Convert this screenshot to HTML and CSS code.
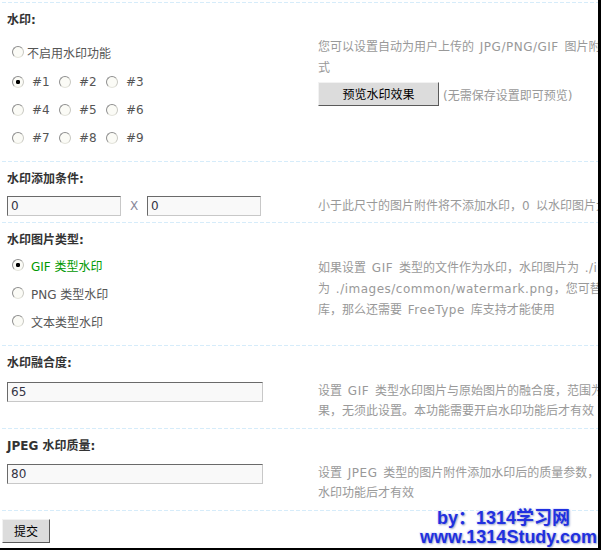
FILE: index.html
```html
<!DOCTYPE html>
<html>
<head>
<meta charset="utf-8">
<link rel="stylesheet" href="styles.css">
</head>
<body>
<div class="page">
  <div class="sec">
    <div class="head">水印:</div>
    <div class="body b1">
      <div class="left">
        <div class="opts first">
          <label class="opt"><input type="radio" class="rd" name="pos"><span>不启用水印功能</span></label>
        </div>
        <div class="opts">
          <label class="opt num"><input type="radio" class="rd" name="pos" checked><span>#1</span></label>
          <label class="opt num"><input type="radio" class="rd" name="pos"><span>#2</span></label>
          <label class="opt num"><input type="radio" class="rd" name="pos"><span>#3</span></label>
        </div>
        <div class="opts">
          <label class="opt num"><input type="radio" class="rd" name="pos"><span>#4</span></label>
          <label class="opt num"><input type="radio" class="rd" name="pos"><span>#5</span></label>
          <label class="opt num"><input type="radio" class="rd" name="pos"><span>#6</span></label>
        </div>
        <div class="opts">
          <label class="opt num"><input type="radio" class="rd" name="pos"><span>#7</span></label>
          <label class="opt num"><input type="radio" class="rd" name="pos"><span>#8</span></label>
          <label class="opt num"><input type="radio" class="rd" name="pos"><span>#9</span></label>
        </div>
      </div>
      <div class="right r1">
        <p class="desc l21">您可以设置自动为用户上传的 <span class="en">JPG/PNG/GIF</span> 图片附件添加水印，请在此选择水印添加的位置(3x3 共 9 个位置可选)。不支持动画 GIF 格<br>式</p>
        <div class="btnrow">
          <button class="btn preview" type="button">预览水印效果</button>
          <span class="note">(无需保存设置即可预览)</span>
        </div>
      </div>
    </div>
  </div>

  <div class="sec">
    <div class="head">水印添加条件:</div>
    <div class="body b2">
      <div class="left sizes">
        <input class="txt short" type="text" value="0">
        <span class="times">X</span>
        <input class="txt short" type="text" value="0">
      </div>
      <div class="right">
        <p class="desc">小于此尺寸的图片附件将不添加水印，<span class="en">0</span> 以水印图片大小为准，0 为不限制</p>
      </div>
    </div>
  </div>

  <div class="sec">
    <div class="head">水印图片类型:</div>
    <div class="body b3">
      <div class="left">
        <div class="opts">
          <label class="opt typ on"><input type="radio" class="rd" name="typ" checked><span>GIF 类型水印</span></label>
        </div>
        <div class="opts">
          <label class="opt typ"><input type="radio" class="rd" name="typ"><span>PNG 类型水印</span></label>
        </div>
        <div class="opts">
          <label class="opt typ"><input type="radio" class="rd" name="typ"><span>文本类型水印</span></label>
        </div>
      </div>
      <div class="right r3">
        <p class="desc l21">如果设置 <span class="en">GIF</span> 类型的文件作为水印，水印图片为 <span class="en">./images/common/watermark.gif</span>，如果设置 PNG 类型的文件作为水印，水印图片<br>为 <span class="en">./images/common/watermark.png</span>，您可替换水印文件以实现不同的水印效果。如果设置文本类型的水印并且使用 TrueType 字体<br>库，那么还需要 <span class="en">FreeType</span> 库支持才能使用</p>
      </div>
    </div>
  </div>

  <div class="sec">
    <div class="head">水印融合度:</div>
    <div class="body b4">
      <div class="left inp">
        <input class="txt long" type="text" value="65">
      </div>
      <div class="right rin">
        <p class="desc l20">设置 <span class="en">GIF</span> 类型水印图片与原始图片的融合度，范围为 1～100 的整数，数值越大水印图片透明度越低。PNG 类型水印本身即可实现融合效<br>果，无须此设置。本功能需要开启水印功能后才有效</p>
      </div>
    </div>
  </div>

  <div class="sec">
    <div class="head">JPEG 水印质量:</div>
    <div class="body b5">
      <div class="left inp">
        <input class="txt long" type="text" value="80">
      </div>
      <div class="right rin">
        <p class="desc l20">设置 <span class="en">JPEG</span> 类型的图片附件添加水印后的质量参数，范围为 0～100 的整数，数值越大结果图片效果越好，但尺寸也越大。本功能需要开启<br>水印功能后才有效</p>
      </div>
    </div>
  </div>

  <div class="sec foot">
    <button class="btn submit" type="submit">提交</button>
  </div>

  <div class="stamp">
    <div class="s1">by：1314学习网</div>
    <div class="s2">www.1314Study.com</div>
  </div>
</div>
</body>
</html>
```

FILE: styles.css
```css
* { box-sizing: border-box; }

body {
  margin: 0;
  background: #fff;
  font-family: "DejaVu Sans", "Noto Sans CJK SC", sans-serif;
  font-size: 12px;
  color: #333;
}

.page {
  position: relative;
  width: 601px;
  height: 550px;
  padding-top: 2px;
  border-right: 3px solid #000;
  border-bottom: 2px solid #000;
  overflow: hidden;
  background: #fff;
}

.sec {
  margin-left: 2px;
  padding: 1px 0 0 5px;
  background: repeating-linear-gradient(to right, #d6ecfa 0 4px, transparent 4px 6px) top left / 100% 1px no-repeat;
}

.head {
  padding-top: 7px;
  height: 27px;
  line-height: 20px;
  font-weight: bold;
  color: #333;
}

.body {
  display: flex;
}

.left {
  width: 311px;
  flex-shrink: 0;
}

.right {
  flex: 1;
  min-width: 0;
  white-space: nowrap;
}

.desc {
  margin: 0;
  color: #999;
  line-height: 20px;
  word-spacing: 2px;
}

.desc .en { letter-spacing: 0.5px; }

.desc.l21 { line-height: 21px; }
.desc.l20 { line-height: 20px; }

/* section 1 */
.b1 { padding-bottom: 9px; }
.b1 .left { padding-top: 8px; }
.r1 { padding-top: 7px; }

.opts {
  display: flex;
  align-items: center;
  height: 28px;
}

.opts.first { margin-bottom: 2px; }

.opt {
  display: inline-flex;
  align-items: center;
  color: #555;
  cursor: default;
}

.opt.num { width: 47px; }
.opt.num span { margin-left: 5px; }
.opt.typ span { margin-left: 4px; }
.opt.on { color: #090; }

.rd {
  appearance: none;
  -webkit-appearance: none;
  width: 12px;
  height: 12px;
  margin: 0 3px 0 5px;
  border-radius: 50%;
  border: 1px solid;
  border-color: #8e8e8e #c9c9c2 #e4e4dc #8e8e8e;
  background: #fbfbf6;
  flex-shrink: 0;
}

.rd:checked {
  background: radial-gradient(circle, #000 0 2px, #fbfbf6 2.3px);
}

.btnrow {
  display: flex;
  align-items: center;
  margin-top: 3px;
}

.btn {
  font-family: "Noto Sans CJK SC", "DejaVu Sans", sans-serif;
  font-size: 12px;
  color: #000;
  background: #dcdcdc;
  border: 1px solid;
  border-color: #f2f2f2 #5a5a5a #5a5a5a #f2f2f2;
  padding: 0;
  height: 24px;
  line-height: 20px;
}

.preview { width: 121px; }

.note {
  margin-left: 4px;
  color: #999;
}

/* inputs */
.txt {
  height: 20px;
  padding: 0 3px;
  border: 1px solid;
  border-color: #6a6a6a #c8c8c8 #c8c8c8 #6a6a6a;
  background: #f9f9f9;
  font-family: "DejaVu Sans", "Noto Sans CJK SC", sans-serif;
  font-size: 12px;
  color: #334;
  outline: none;
}

.short { width: 114px; }
.long { width: 256px; }

.sizes {
  display: flex;
  align-items: center;
}

.times {
  width: 26px;
  text-align: center;
  color: #889;
}

.b2 {
  align-items: center;
  padding-top: 7px;
  padding-bottom: 6px;
}

/* section 3 */
.b3 { padding-top: 1px; padding-bottom: 10px; }
.r3 { padding-top: 7px; }

/* sections 4, 5 */
.b4 { padding-top: 8px; padding-bottom: 7px; }
.b5 { padding-top: 7px; padding-bottom: 7px; }
.inp { padding-top: 1px; }

/* footer */
.foot {
  padding-left: 0;
  padding-top: 9px;
}

.submit {
  width: 48px;
  height: 24px;
}

/* watermark stamp overlay */
.stamp {
  position: absolute;
  left: 420px;
  top: 509px;
  font-family: "Liberation Sans", "Noto Sans CJK SC", sans-serif;
  font-weight: bold;
  font-size: 18px;
  line-height: 19px;
  color: #2030e0;
  text-shadow: 1px 1px 2px #9aa0c8, -1px -1px 1px #e8ecff;
  white-space: nowrap;
}

.s1 { padding-left: 17px; }
```
